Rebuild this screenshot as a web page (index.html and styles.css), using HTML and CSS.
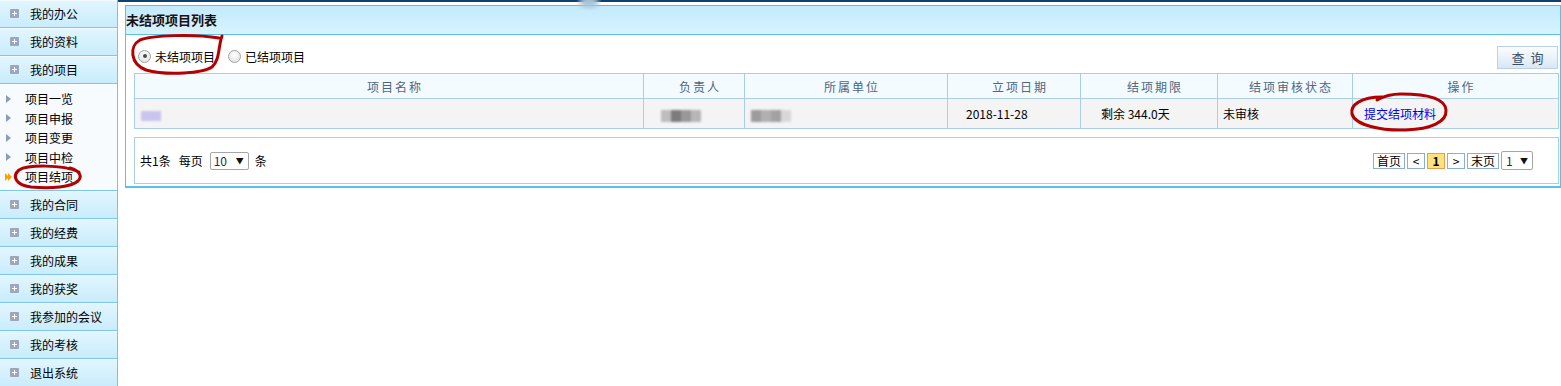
FILE: index.html
```html
<!DOCTYPE html>
<html>
<head>
	<meta charset="UTF-8">
	<title>未结项项目列表</title>
<link rel="stylesheet" href="styles.css">
</head>
<body>

<div class="page">

	<!-- 左侧菜单 -->
	<aside class="side">
		<div class="menu"><i class="ico"></i>我的办公</div>
		<div class="menu"><i class="ico"></i>我的资料</div>
		<div class="menu"><i class="ico"></i>我的项目</div>
		<ul class="sub">
			<li><i class="arr"></i>项目一览</li>
			<li><i class="arr"></i>项目申报</li>
			<li><i class="arr"></i>项目变更</li>
			<li><i class="arr"></i>项目中检</li>
			<li class="cur"><i class="arr2"></i>项目结项</li>
		</ul>
		<div class="menu"><i class="ico"></i>我的合同</div>
		<div class="menu"><i class="ico"></i>我的经费</div>
		<div class="menu"><i class="ico"></i>我的成果</div>
		<div class="menu"><i class="ico"></i>我的获奖</div>
		<div class="menu"><i class="ico"></i>我参加的会议</div>
		<div class="menu"><i class="ico"></i>我的考核</div>
		<div class="menu"><i class="ico"></i>退出系统</div>
	</aside>

	<!-- 主体 -->
	<div class="main">
		<div class="panel">
			<div class="panel-hd">未结项项目列表</div>
			<div class="panel-bd">

				<div class="toolbar">
					<div class="radios">
						<label class="rd"><span class="radio on"></span>未结项项目</label>
						<label class="rd"><span class="radio"></span>已结项项目</label>
					</div>
					<span class="btn">查询</span>
				</div>

				<table class="grid">
					<colgroup>
						<col style="width:509px">
						<col style="width:101px">
						<col style="width:203px">
						<col style="width:133px">
						<col style="width:137px">
						<col style="width:135px">
						<col style="width:206px">
					</colgroup>
					<thead>
						<tr>
							<th>项目名称</th>
							<th>负责人</th>
							<th>所属单位</th>
							<th>立项日期</th>
							<th>结项期限</th>
							<th>结项审核状态</th>
							<th>操作</th>
						</tr>
					</thead>
					<tbody>
						<tr>
							<td class="p6"><span class="mask m-name"></span></td>
							<td class="p17"><span class="mask m-person"></span></td>
							<td class="p6"><span class="mask m-unit"></span></td>
							<td class="p18">2018-11-28</td>
							<td class="p20">剩余 344.0天</td>
							<td class="p5">未审核</td>
							<td class="p11"><a class="link" href="#">提交结项材料</a></td>
						</tr>
					</tbody>
				</table>

				<div class="pager">
					<div class="pg-left">
						<span>共1条</span>
						<span class="ml8">每页</span>
						<span class="sel sel-size"><b>10</b><em>▼</em></span>
						<span>条</span>
					</div>
					<div class="pg-right">
						<span class="pg">首页</span>
						<span class="pg pg-s">&lt;</span>
						<span class="pg pg-s pg-on">1</span>
						<span class="pg pg-s">&gt;</span>
						<span class="pg">末页</span>
						<span class="sel sel-page"><b>1</b><em>▼</em></span>
					</div>
				</div>

			</div>
		</div>
	</div>

</div>

<!-- 红色标注 -->
<svg class="marks" width="1561" height="386" viewBox="0 0 1561 386">
	<defs>
		<filter id="soft"><feGaussianBlur stdDeviation="2.5"/></filter>
	</defs>
	<ellipse cx="589" cy="2" rx="10" ry="6" fill="#a9c4d8" filter="url(#soft)"/>
	<path d="M219 38 C195 34,152 35,140 40 C129 46,130 64,146 70 C168 76,203 73,212 67 C220 60,218 47,222 36"/>
	<path d="M79 172 C62 164,27 165,19 170 C12 176,15 185,31 187 C52 189,71 187,78 181 C82 177,81 171,70 168"/>
	<path d="M1382 97 C1361 97,1350 105,1352 114 C1355 125,1381 131,1406 130 C1431 129,1447 122,1446 110 C1445 98,1426 94,1401 94 C1391 94,1384 96,1377 100"/>
</svg>

</body>
</html>
```

FILE: styles.css
```css
body {
	margin: 0;
	font: 12px "Noto Sans CJK SC", "Liberation Sans", sans-serif;
	color: #000;
	background: #fff;
}
ul {
	margin: 0;
	padding: 0;
	list-style: none;
}
.page {
	display: flex;
	height: 386px;
	overflow: hidden;
}

/* 左侧菜单 */
.side {
	width: 117px;
	flex: none;
	border-right: 1px solid #74c3eb;
}
.menu {
	height: 27px;
	display: flex;
	align-items: center;
	padding-left: 10px;
	border-bottom: 1px solid #7bc7ee;
	background: linear-gradient(#e2f6fe, #c9ecfc);
	box-shadow: inset 0 1px 0 #f4fbff;
	white-space: nowrap;
}
.ico {
	width: 9px;
	height: 9px;
	margin-right: 11px;
	border-radius: 1px;
	background: #9ea5bf;
	position: relative;
	flex: none;
}
.ico:before,
.ico:after {
	content: '';
	position: absolute;
	background: #fff;
}
.ico:before {
	left: 2px;
	top: 4px;
	width: 5px;
	height: 1px;
}
.ico:after {
	left: 4px;
	top: 2px;
	width: 1px;
	height: 5px;
}
.sub {
	padding: 5px 0 3.5px;
	background: #f7fbfe;
	border-bottom: 1px solid #7bc7ee;
}
.sub li {
	height: 19.5px;
	display: flex;
	align-items: center;
	padding-left: 6px;
}
.arr {
	width: 0;
	height: 0;
	margin-right: 14px;
	border-left: 5px solid #8d9bbd;
	border-top: 4px solid transparent;
	border-bottom: 4px solid transparent;
}
.arr2 {
	width: 0;
	height: 0;
	margin: 0 16px 0 -1px;
	border-left: 4px solid #f6a300;
	border-top: 4px solid transparent;
	border-bottom: 4px solid transparent;
	position: relative;
}
.arr2:after {
	content: '';
	position: absolute;
	left: -1px;
	top: -4px;
	border-left: 4px solid #f6a300;
	border-top: 4px solid transparent;
	border-bottom: 4px solid transparent;
}

/* 主体 */
.main {
	flex: 1;
	border-top: 2px solid #0e416e;
	padding: 3px 1px 0 7px;
}
.panel {
	border: 1px solid #55c2ee;
	border-bottom-width: 2px;
}
.panel-hd {
	height: 28px;
	line-height: 28px;
	font-size: 13px;
	font-weight: bold;
	color: #1a1010;
	background: linear-gradient(#c3eafc, #d7f3fe);
	border-bottom: 1px solid #5ec0ea;
}
.panel-bd {
	padding: 11px 1px 2px 8px;
}
.toolbar {
	height: 23px;
	margin-bottom: 4px;
	display: flex;
	align-items: center;
	justify-content: space-between;
}
.radios {
	display: flex;
	align-items: center;
	padding-left: 4px;
	margin-top: -3px;
}
.rd {
	display: flex;
	align-items: center;
	margin-right: 13px;
}
.radio {
	width: 11px;
	height: 11px;
	margin-right: 4px;
	border: 1px solid #a2a2a2;
	border-radius: 50%;
	background: radial-gradient(circle at 50% 35%, #fff, #dcdcdc);
	display: flex;
	align-items: center;
	justify-content: center;
}
.radio.on:after {
	content: '';
	width: 4px;
	height: 4px;
	border-radius: 50%;
	background: #4a4a4a;
}
.btn {
	width: 59px;
	height: 21px;
	margin-right: 1px;
	line-height: 21px;
	text-align: center;
	font-size: 13px;
	letter-spacing: 6px;
	text-indent: 6px;
	color: #3a4e66;
	border: 1px solid #b7d2ea;
	background: linear-gradient(#fbfdff, #d9e7f4);
}

/* 表格 */
.grid {
	width: 100%;
	table-layout: fixed;
	border-collapse: collapse;
}
.grid th,
.grid td {
	border: 1px solid #a9cdea;
	white-space: nowrap;
}
.grid th {
	height: 24px;
	padding: 0 0 0 12px;
	font-weight: normal;
	letter-spacing: 2px;
	color: #4c6784;
	background: #f3fbff;
}
.grid td {
	height: 29px;
	padding: 0;
	background: #f4f4f4;
}
.p5 { padding-left: 5px !important; }
.p6 { padding-left: 6px !important; }
.p11 { padding-left: 11px !important; }
.p17 { padding-left: 17px !important; }
.p18 { padding-left: 18px !important; }
.p20 { padding-left: 20px !important; }
.mask {
	display: inline-block;
	vertical-align: middle;
	filter: blur(1px);
}
.m-name {
	width: 20px;
	height: 10px;
	background: #c8c5ee;
}
.m-person {
	width: 40px;
	height: 12px;
	background: linear-gradient(90deg, #bdbdbd 0 25%, #7c7c7c 25% 50%, #999 50% 75%, #b7b7b7 75%);
}
.m-unit {
	width: 40px;
	height: 12px;
	background: linear-gradient(90deg, #9c9c9c 0 25%, #b0b0b0 25% 50%, #a2a2a2 50% 75%, #d8d8d8 75%);
}
.link {
	color: #0000ee;
	text-decoration: none;
}

/* 分页 */
.pager {
	height: 45px;
	margin-top: 8px;
	padding: 0 25px 0 5px;
	border: 1px solid #a9cdea;
	display: flex;
	align-items: center;
	justify-content: space-between;
}
.pg-left,
.pg-right {
	display: flex;
	align-items: center;
}
.ml8 {
	margin-left: 8px;
}
.sel {
	height: 16px;
	border: 1px solid #a6a6a6;
	border-radius: 2px;
	background: #fff;
	display: flex;
	align-items: center;
	justify-content: space-between;
	box-sizing: content-box;
}
.sel b {
	font-weight: normal;
	color: #1d2a50;
}
.sel em {
	font-style: normal;
	font-size: 8px;
	color: #111;
}
.sel-size {
	width: 30px;
	padding: 0 4px 0 3px;
	margin: 0 6px 0 7px;
}
.sel-page {
	width: 22px;
	height: 17px;
	padding: 0 4px 0 4px;
	margin-left: 2px;
}
.pg {
	height: 14px;
	line-height: 14px;
	padding: 0 3px;
	margin-left: 2px;
	border: 1px solid #89afd3;
	background: #fff;
}
.pg-s {
	width: 10px;
	text-align: center;
}
.pg-on {
	font-weight: bold;
	background: #ffe27f;
	border-color: #e3a04c;
}

/* 标注 */
.marks {
	position: absolute;
	left: 0;
	top: 0;
	pointer-events: none;
}
.marks path {
	fill: none;
	stroke: #b30000;
	stroke-width: 3;
	stroke-linecap: round;
}
```
